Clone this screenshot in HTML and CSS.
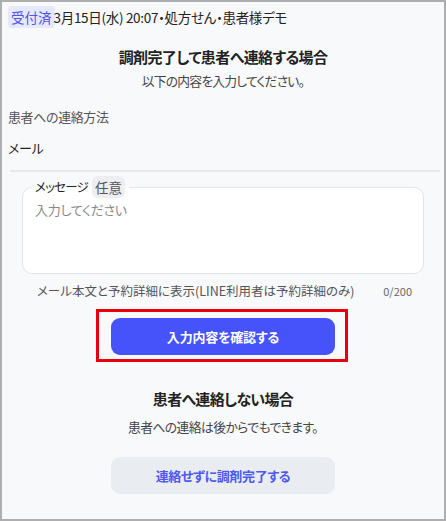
FILE: index.html
```html
<!DOCTYPE html>
<html lang="ja">
<head>
<meta charset="utf-8">
<link rel="stylesheet" href="styles.css">
</head>
<body>
<div class="frame">
  <div class="meta">
    <span class="badge">受付済</span>
    <span class="meta-text">3月15日(水) 20:07・処方せん・患者様デモ</span>
  </div>

  <h2 class="title first">調剤完了して患者へ連絡する場合</h2>
  <p class="sub">以下の内容を入力してください。</p>

  <div class="field-label">患者への連絡方法</div>
  <div class="field-value">メール</div>
  <hr class="divider">

  <div class="textarea">
    <div class="legend"><span class="legend-text">メッセージ</span><span class="chip">任意</span></div>
    <div class="placeholder">入力してください</div>
  </div>
  <div class="helper">
    <span>メール本文と予約詳細に表示(LINE利用者は予約詳細のみ)</span>
    <span class="count">0/200</span>
  </div>

  <div class="btn-wrap">
    <button class="btn primary">入力内容を確認する</button>
    <span class="highlight"></span>
  </div>

  <h2 class="title second">患者へ連絡しない場合</h2>
  <p class="sub second">患者への連絡は後からでもできます。</p>

  <div class="btn-wrap plain">
    <button class="btn secondary">連絡せずに調剤完了する</button>
  </div>
</div>
</body>
</html>
```

FILE: styles.css
```css
* { box-sizing: border-box; }
html, body { margin: 0; padding: 0; }
body {
  font-family: "Noto Sans CJK JP", "Noto Sans", sans-serif;
  font-feature-settings: "palt";
  color: #222;
}
.frame {
  width: 446px;
  height: 521px;
  border: 2px solid #aeaeae;
  background: #f8f9fb;
  padding: 4px 6px 0 6px;
  display: flex;
  flex-direction: column;
}
.meta {
  display: flex;
  align-items: center;
  gap: 0;
  font-size: 13.5px;
  line-height: 22px;
  letter-spacing: -0.3px;
}
.badge {
  background: #e6e8fd;
  color: #4f56e6;
  border-radius: 4px;
  padding: 0 3px;
  margin-right: -1px;
  letter-spacing: 0;
}
.meta-text { color: #222; }
.title {
  margin: 0;
  text-align: center;
  font-size: 15px;
  font-weight: 700;
  line-height: 22px;
  color: #222;
  letter-spacing: -0.6px;
}
.title.first { margin-top: 18px; }
.title.second { margin-top: 33px; letter-spacing: -0.7px; }
.sub {
  margin: 2px 0 0 0;
  text-align: center;
  font-size: 12.8px;
  line-height: 22px;
  color: #444;
  letter-spacing: -0.8px;
}
.sub.second { margin-top: 6px; letter-spacing: -0.6px; }
.field-label {
  margin-top: 14px;
  font-size: 13px;
  line-height: 22px;
  color: #555;
  letter-spacing: -0.4px;
}
.field-value {
  margin-top: 9px;
  font-size: 13px;
  line-height: 22px;
  color: #222;
  letter-spacing: -0.3px;
}
.divider {
  margin: 11px 0 0 2px;
  border: 0;
  border-top: 2px solid #e6e8ec;
  width: 430px;
}
.textarea {
  position: relative;
  margin: 15px 14px 0 14px;
  height: 87px;
  background: #fff;
  border: 1px solid #e2e4e8;
  border-radius: 10px;
  padding: 12px 12px;
}
.legend {
  position: absolute;
  top: -12px;
  left: 9px;
  background: linear-gradient(#f8f9fb 50%, #fff 50%);
  padding: 0 4px 0 3px;
  line-height: 22px;
  color: #222;
  display: flex;
  align-items: center;
  gap: 4px;
}
.legend-text {
  font-size: 12.5px;
  letter-spacing: -0.8px;
}
.chip {
  background: #eceef1;
  border-radius: 6px;
  padding: 0 3px;
  color: #555;
  font-size: 13.5px;
  letter-spacing: 0;
}
.placeholder {
  font-size: 13px;
  line-height: 20px;
  color: #888;
  margin-top: 0;
  letter-spacing: -0.3px;
}
.helper {
  display: flex;
  justify-content: space-between;
  align-items: center;
  margin: 7px 26px 0 29px;
  font-size: 12.5px;
  line-height: 20px;
  color: #555;
}
.count { font-size: 11px; color: #666; }
.btn-wrap {
  position: relative;
  display: flex;
  justify-content: center;
  margin-top: 17px;
}
.btn {
  width: 224px;
  height: 37px;
  border: 0;
  border-radius: 9px;
  font-family: inherit;
  font-feature-settings: "palt";
  font-size: 13px;
  font-weight: 700;
  letter-spacing: -0.2px;
}
.btn.primary { background: #4653fb; color: #fff; }
.btn.secondary { background: #e9edf2; color: #4f58ef; letter-spacing: -0.35px; }
.btn-wrap.plain { margin-top: 19px; }
.highlight {
  position: absolute;
  left: 88px;
  top: -9px;
  width: 252px;
  height: 53px;
  border: 3px solid #e8000b;
  pointer-events: none;
}
```
